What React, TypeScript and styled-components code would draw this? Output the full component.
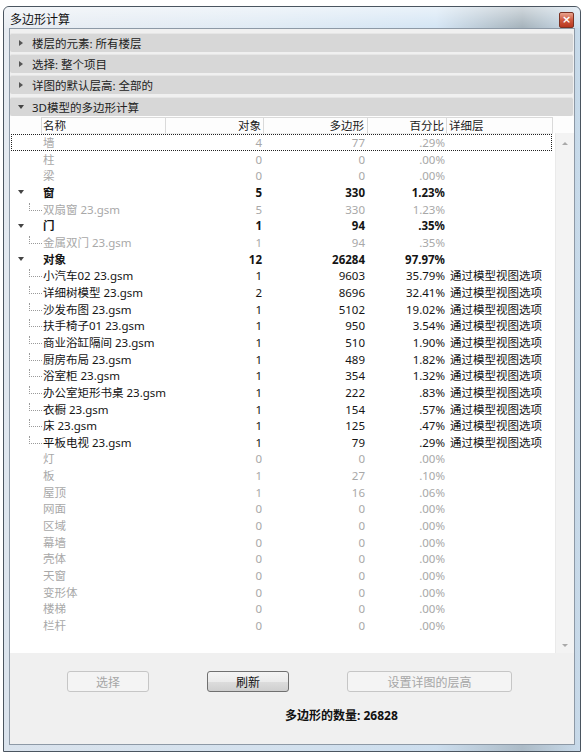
import React from "react";
import styled, { createGlobalStyle } from "styled-components";

const GlobalStyle = createGlobalStyle`
  body {
    margin: 0;
    background: #ffffff;
    font-family: "Noto Sans", "Noto Sans CJK SC", sans-serif;
    font-size: 11.5px;
    color: #1a1a1a;
  }
`;

const Window = styled.div`
  margin: 6px 0 0 3px;
  width: 578px;
  height: 746px;
  box-sizing: border-box;
  border: 1px solid #4a5560;
  border-radius: 6px 6px 0 0;
  background: linear-gradient(to right, #e6ebf1 0%, #dce8f3 45%, #cfe2f3 75%, #9aa9b3 90%, #c9dcec 100%);
  display: flex;
  flex-direction: column;
  overflow: hidden;
`;

const TitleBar = styled.div`
  height: 21px;
  display: flex;
  align-items: center;
  justify-content: space-between;
  padding: 0 6px 0 6px;
  background: linear-gradient(to bottom, rgba(255, 255, 255, 0.55), rgba(255, 255, 255, 0.1));
`;

const TitleText = styled.span`
  font-size: 12px;
  color: #111;
  padding-top: 2px;
`;

const CloseButton = styled.div`
  width: 15px;
  height: 16px;
  margin-top: 5px;
  box-sizing: border-box;
  border: 1px solid #7b3223;
  border-radius: 2px;
  background: linear-gradient(to bottom, #e9a38f, #cf5a3f 50%, #b8371f);
  color: #fff;
  font-size: 11px;
  font-weight: bold;
  line-height: 13px;
  text-align: center;
  font-family: "DejaVu Sans", sans-serif;
`;

const Frame = styled.div`
  flex: 1;
  display: flex;
  padding: 0 5px 6px 5px;
  background: linear-gradient(to bottom, transparent, rgba(200, 215, 230, 0.4));
`;

const Panel = styled.div`
  flex: 1;
  display: flex;
  flex-direction: column;
  border: 1px solid #8d99a6;
  background: #f0f0f0;
`;

const Sections = styled.div`
  display: flex;
  flex-direction: column;
  gap: 2px;
  padding: 4px 1px 0 0;
`;

const SectionBar = styled.div`
  height: 19px;
  display: flex;
  align-items: center;
  gap: 6px;
  padding-left: 6px;
  background: #d7d7d7;
  border-top: 1px solid #e6e6e6;
  box-sizing: border-box;
  border-radius: 2px;
  color: #222;
  &:nth-child(4) {
    margin-top: 1px;
  }
`;

const Arrow = styled.span<{ $open?: boolean }>`
  width: 10px;
  height: 10px;
  display: inline-flex;
  align-items: center;
  justify-content: center;
  flex: none;
  &::before {
    content: "";
    border-style: solid;
    border-color: transparent;
    ${(p) =>
      p.$open
        ? `border-width: 4px 3.5px 0 3.5px; border-top-color: #444;`
        : `border-width: 3.5px 0 3.5px 4px; border-left-color: #555;`}
  }
`;

const TableArea = styled.div`
  display: grid;
  grid-template-columns: 1fr 19px;
  grid-template-rows: 17px 520px;
  background: #ffffff;
`;

const COLS = "31px 124px 98px 104px 79px 1fr";

const Header = styled.div`
  display: grid;
  grid-template-columns: ${COLS};
  background: #fdfdfd;
  padding-top: 1px;
`;

const HeaderCell = styled.div<{ $align?: "left" | "right"; $pad?: number }>`
  border-left: 1px solid #dadada;
  border-top: 1px solid #dadada;
  border-bottom: 1px solid #ececec;
  text-align: ${(p) => p.$align || "left"};
  padding: 0 ${(p) => (p.$align === "right" ? p.$pad ?? 2 : 0)}px 0
    ${(p) => (p.$align === "right" ? 0 : p.$pad ?? 2)}px;
  line-height: 15px;
  color: #1a1a1a;
  &:first-child {
    border: none;
  }
  &:last-child {
    border-right: 1px solid #dadada;
    margin-right: 2px;
  }
`;

const HeaderGap = styled.div`
  background: #fdfdfd;
`;

const List = styled.div`
  padding-top: 1px;
`;

type Tone = "grey" | "bold" | "normal";

const Row = styled.div<{ $tone: Tone; $focus?: boolean }>`
  display: grid;
  grid-template-columns: ${COLS};
  height: 16.66px;
  box-sizing: border-box;
  padding-top: 1px;
  line-height: 15.66px;
  position: relative;
  color: ${(p) => (p.$tone === "grey" ? "#a8a8a8" : "#141414")};
  font-weight: ${(p) => (p.$tone === "bold" ? "bold" : "normal")};
  outline: ${(p) => (p.$focus ? "1px dotted #222" : "none")};
  outline-offset: -1px;
  margin-left: 1px;
  margin-right: 3px;
`;

const Gutter = styled.div`
  position: relative;
  display: flex;
  align-items: center;
  padding-left: 5px;
  margin-top: -1px;
`;

const TreeLine = styled.span`
  position: absolute;
  left: 18px;
  top: 2px;
  height: 7px;
  width: 12px;
  border-left: 1px dotted #9a9a9a;
  border-bottom: 1px dotted #9a9a9a;
`;

const Cell = styled.div<{ $align?: "left" | "right"; $pad?: number }>`
  text-align: ${(p) => p.$align || "left"};
  padding-right: ${(p) => (p.$align === "right" ? p.$pad ?? 2 : 0)}px;
  padding-left: ${(p) => (p.$align === "right" ? 0 : p.$pad ?? 1)}px;
  white-space: nowrap;
`;

const ScrollBar = styled.div`
  background: #f3f3f3;
  border-left: 1px solid #eaeaea;
  display: flex;
  flex-direction: column;
  justify-content: space-between;
  align-items: center;
  padding: 9px 0 6px;
`;

const ScrollArrow = styled.span<{ $up?: boolean }>`
  border-style: solid;
  border-color: transparent;
  ${(p) =>
    p.$up
      ? `border-width: 0 3px 3px 3px; border-bottom-color: #a9a9a9;`
      : `border-width: 3px 3px 0 3px; border-top-color: #a9a9a9;`}
`;

const Footer = styled.div`
  flex: 1;
  display: flex;
  flex-direction: column;
  padding: 18px 0 0 57px;
  gap: 14px;
`;

const ButtonRow = styled.div`
  display: flex;
  gap: 58px;
`;

const Button = styled.button<{ $w: number }>`
  width: ${(p) => p.$w}px;
  height: 21px;
  font-family: "Noto Sans CJK SC", sans-serif;
  font-size: 12px;
  border-radius: 3px;
  padding: 0;
  color: ${(p) => (p.disabled ? "#a6a6a6" : "#111")};
  border: 1px solid ${(p) => (p.disabled ? "#c6c6c6" : "#707070")};
  background: ${(p) =>
    p.disabled
      ? "#f4f4f4"
      : "linear-gradient(to bottom, #f4f4f4 0%, #ebebeb 50%, #dddddd 51%, #cfcfcf 100%)"};
`;

const Total = styled.div`
  padding-left: 218px;
  font-weight: bold;
  font-size: 12px;
  color: #111;
`;

type Item = {
  name: string;
  count: string;
  poly: string;
  pct: string;
  lod?: string;
  tone: Tone;
  open?: boolean;
  child?: boolean;
};

const LOD = "通过模型视图选项";

const items: Item[] = [
  { name: "墙", count: "4", poly: "77", pct: ".29%", tone: "grey" },
  { name: "柱", count: "0", poly: "0", pct: ".00%", tone: "grey" },
  { name: "梁", count: "0", poly: "0", pct: ".00%", tone: "grey" },
  { name: "窗", count: "5", poly: "330", pct: "1.23%", tone: "bold", open: true },
  { name: "双扇窗 23.gsm", count: "5", poly: "330", pct: "1.23%", tone: "grey", child: true },
  { name: "门", count: "1", poly: "94", pct: ".35%", tone: "bold", open: true },
  { name: "金属双门 23.gsm", count: "1", poly: "94", pct: ".35%", tone: "grey", child: true },
  { name: "对象", count: "12", poly: "26284", pct: "97.97%", tone: "bold", open: true },
  { name: "小汽车02 23.gsm", count: "1", poly: "9603", pct: "35.79%", lod: LOD, tone: "normal", child: true },
  { name: "详细树模型 23.gsm", count: "2", poly: "8696", pct: "32.41%", lod: LOD, tone: "normal", child: true },
  { name: "沙发布图 23.gsm", count: "1", poly: "5102", pct: "19.02%", lod: LOD, tone: "normal", child: true },
  { name: "扶手椅子01 23.gsm", count: "1", poly: "950", pct: "3.54%", lod: LOD, tone: "normal", child: true },
  { name: "商业浴缸隔间 23.gsm", count: "1", poly: "510", pct: "1.90%", lod: LOD, tone: "normal", child: true },
  { name: "厨房布局 23.gsm", count: "1", poly: "489", pct: "1.82%", lod: LOD, tone: "normal", child: true },
  { name: "浴室柜 23.gsm", count: "1", poly: "354", pct: "1.32%", lod: LOD, tone: "normal", child: true },
  { name: "办公室矩形书桌 23.gsm", count: "1", poly: "222", pct: ".83%", lod: LOD, tone: "normal", child: true },
  { name: "衣橱 23.gsm", count: "1", poly: "154", pct: ".57%", lod: LOD, tone: "normal", child: true },
  { name: "床 23.gsm", count: "1", poly: "125", pct: ".47%", lod: LOD, tone: "normal", child: true },
  { name: "平板电视 23.gsm", count: "1", poly: "79", pct: ".29%", lod: LOD, tone: "normal", child: true },
  { name: "灯", count: "0", poly: "0", pct: ".00%", tone: "grey" },
  { name: "板", count: "1", poly: "27", pct: ".10%", tone: "grey" },
  { name: "屋顶", count: "1", poly: "16", pct: ".06%", tone: "grey" },
  { name: "网面", count: "0", poly: "0", pct: ".00%", tone: "grey" },
  { name: "区域", count: "0", poly: "0", pct: ".00%", tone: "grey" },
  { name: "幕墙", count: "0", poly: "0", pct: ".00%", tone: "grey" },
  { name: "壳体", count: "0", poly: "0", pct: ".00%", tone: "grey" },
  { name: "天窗", count: "0", poly: "0", pct: ".00%", tone: "grey" },
  { name: "变形体", count: "0", poly: "0", pct: ".00%", tone: "grey" },
  { name: "楼梯", count: "0", poly: "0", pct: ".00%", tone: "grey" },
  { name: "栏杆", count: "0", poly: "0", pct: ".00%", tone: "grey" },
];

const sections = [
  { label: "楼层的元素: 所有楼层", open: false },
  { label: "选择: 整个项目", open: false },
  { label: "详图的默认层高: 全部的", open: false },
  { label: "3D模型的多边形计算", open: true },
];

export default function App() {
  return (
    <>
      <GlobalStyle />
      <Window>
        <TitleBar>
          <TitleText>多边形计算</TitleText>
          <CloseButton>×</CloseButton>
        </TitleBar>
        <Frame>
          <Panel>
            <Sections>
              {sections.map((s) => (
                <SectionBar key={s.label}>
                  <Arrow $open={s.open} />
                  <span>{s.label}</span>
                </SectionBar>
              ))}
            </Sections>
            <TableArea>
              <Header>
                <HeaderCell />
                <HeaderCell $pad={1}>名称</HeaderCell>
                <HeaderCell $align="right">对象</HeaderCell>
                <HeaderCell $align="right" $pad={3}>多边形</HeaderCell>
                <HeaderCell $align="right">百分比</HeaderCell>
                <HeaderCell $pad={2}>详细层</HeaderCell>
              </Header>
              <HeaderGap />
              <List>
                {items.map((it, i) => (
                  <Row key={it.name} $tone={it.tone} $focus={i === 0}>
                    <Gutter>
                      {it.open && <Arrow $open />}
                      {it.child && <TreeLine />}
                    </Gutter>
                    <Cell>{it.name}</Cell>
                    <Cell $align="right">{it.count}</Cell>
                    <Cell $align="right" $pad={3}>{it.poly}</Cell>
                    <Cell $align="right">{it.pct}</Cell>
                    <Cell $pad={3}>{it.lod}</Cell>
                  </Row>
                ))}
              </List>
              <ScrollBar>
                <ScrollArrow $up />
                <ScrollArrow />
              </ScrollBar>
            </TableArea>
            <Footer>
              <ButtonRow>
                <Button $w={82} disabled>选择</Button>
                <Button $w={82}>刷新</Button>
                <Button $w={165} disabled>设置详图的层高</Button>
              </ButtonRow>
              <Total>多边形的数量: 26828</Total>
            </Footer>
          </Panel>
        </Frame>
      </Window>
    </>
  );
}
